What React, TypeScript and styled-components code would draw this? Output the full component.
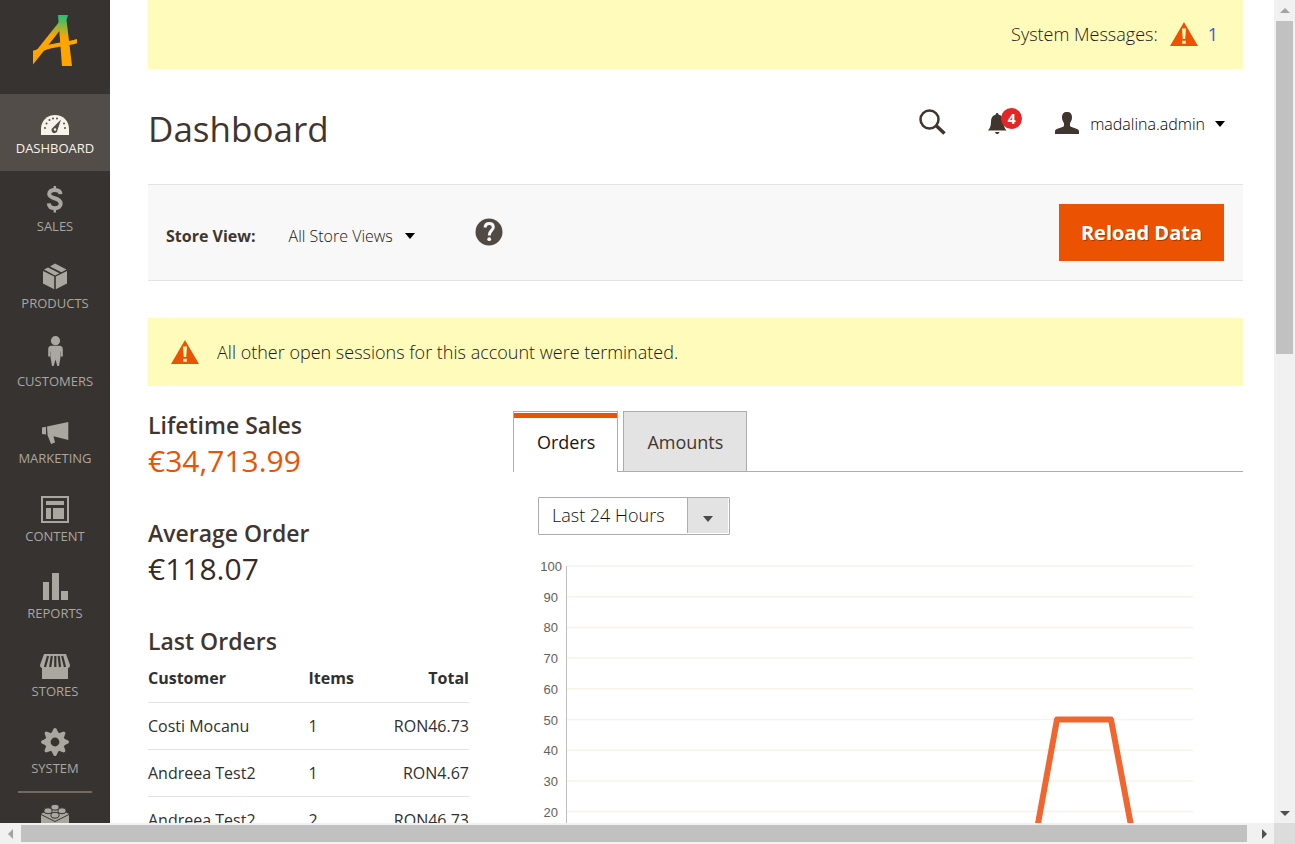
import React from "react";
import styled, { createGlobalStyle } from "styled-components";

const GlobalStyle = createGlobalStyle`
  *, *::before, *::after { box-sizing: border-box; }
  body {
    margin: 0;
    background: #fff;
    color: #41362f;
    font-family: "Open Sans", "Noto Sans", sans-serif;
    font-size: 16px;
    line-height: 22px;
  }
  button, select { font-family: inherit; color: inherit; }
  h1, h2, p, ul { margin: 0; padding: 0; }
`;

/* ---------- frame ---------- */

const Frame = styled.div`
  display: grid;
  grid-template-columns: minmax(0, 1fr) 21px;
  grid-template-rows: minmax(0, 1fr) 21px;
  height: 100vh;
  overflow: hidden;
`;

const Page = styled.div`
  display: flex;
  align-items: flex-start;
  overflow: hidden;
`;

const ScrollTrack = styled.div<{ $vertical?: boolean }>`
  display: flex;
  flex-direction: ${(p) => (p.$vertical ? "column" : "row")};
  padding: ${(p) => (p.$vertical ? "0 2px" : "2px 0")};
  background: #f1f1f1;
`;

const ScrollArrow = styled.span<{ $vertical?: boolean }>`
  flex: none;
  display: grid;
  place-items: center;
  width: ${(p) => (p.$vertical ? "17px" : "21px")};
  height: ${(p) => (p.$vertical ? "21px" : "17px")};
`;

const ScrollThumb = styled.span<{ $share: number }>`
  flex: ${(p) => p.$share} 1 0;
  background: #c1c1c1;
`;

const ScrollRest = styled.span<{ $share: number }>`
  flex: ${(p) => p.$share} 1 0;
`;

const ScrollCorner = styled.div`
  background: #dcdcdc;
`;

/* ---------- sidebar ---------- */

const Sidebar = styled.aside`
  flex: none;
  width: 110px;
  min-height: 100vh;
  background: #373330;
`;

const LogoLink = styled.a`
  display: flex;
  justify-content: center;
  height: 94px;
  padding-top: 15px;
`;

const Menu = styled.ul`
  list-style: none;
`;

const MenuLink = styled.a`
  display: flex;
  flex-direction: column;
  align-items: center;
  gap: 2px;
  padding-top: 10px;
  color: inherit;
  font-size: 13px;
  line-height: 16px;
  text-decoration: none;
  text-transform: uppercase;
`;

const MenuItem = styled.li<{ $active?: boolean }>`
  height: 77px;
  background: ${(p) => (p.$active ? "#524d49" : "transparent")};
  color: ${(p) => (p.$active ? "#f7f3eb" : "#aaa6a0")};

  &:nth-child(even) {
    height: 78px;
  }

  &:nth-child(even) ${MenuLink} {
    gap: 3px;
  }
`;

const MenuDivider = styled.hr`
  width: 74px;
  height: 2px;
  margin: 0 auto;
  border: 0;
  background: #736963;
`;

/* ---------- main column ---------- */

const Main = styled.main`
  flex: 1;
  min-width: 0;
  padding: 0 31px 0 38px;
`;

const SystemBar = styled.div`
  display: flex;
  align-items: center;
  justify-content: flex-end;
  gap: 12px;
  height: 69px;
  padding: 0 25px 2px 0;
  background: #fffbbb;
  color: #1c1612;
  font-size: 18px;
  font-weight: 300;
`;

const CountLink = styled.a`
  margin-left: -2px;
  color: #2f5fd6;
  font-weight: 400;
  text-decoration: none;
`;

const Header = styled.header`
  display: flex;
  align-items: center;
  justify-content: space-between;
  height: 115px;
  padding: 0 18px 0 0;
`;

const Title = styled.h1`
  padding-top: 5px;
  font-size: 35px;
  font-weight: 400;
  line-height: 48px;
`;

const Tools = styled.div`
  display: flex;
  align-items: center;
  padding-bottom: 6px;
`;

const IconButton = styled.button`
  position: relative;
  display: block;
  padding: 0;
  border: 0;
  background: none;
  margin-right: 42px;
`;

const BellButton = styled(IconButton)`
  margin-right: 47px;
`;

const Badge = styled.span`
  position: absolute;
  top: -1px;
  left: 13px;
  width: 21px;
  height: 21px;
  border-radius: 50%;
  background: #e22626;
  color: #fff;
  font-size: 14px;
  font-weight: 700;
  line-height: 21px;
  text-align: center;
`;

const AccountButton = styled.button`
  display: flex;
  align-items: center;
  gap: 10px;
  padding: 0;
  border: 0;
  background: none;
  color: #000;
  font-size: 16px;
  font-weight: 300;
  line-height: 22px;
`;

const Toolbar = styled.section`
  display: flex;
  align-items: center;
  height: 97px;
  padding: 0 19px 0 18px;
  border-top: 1px solid #e3e3e3;
  border-bottom: 1px solid #e3e3e3;
  background: #f8f8f8;
`;

const ToolbarLabel = styled.span`
  margin-right: 33px;
  padding-top: 6px;
  font-weight: 700;
`;

const StoreSwitch = styled.button`
  display: flex;
  align-items: center;
  gap: 12px;
  margin-right: 60px;
  padding: 6px 0 0;
  border: 0;
  background: none;
  color: #1c1612;
  font-size: 16px;
  font-weight: 300;
  line-height: 22px;
`;

const HelpLink = styled.a`
  display: block;
  height: 30px;
  margin-right: auto;
`;

const PrimaryButton = styled.button`
  height: 57px;
  padding: 0 22px;
  border: 0;
  background: #eb5202;
  color: #fff;
  font-size: 20px;
  font-weight: 700;
  text-shadow: 1px 1px 0 rgba(0, 0, 0, 0.3);
`;

const Notice = styled.p`
  display: flex;
  align-items: center;
  gap: 18px;
  height: 68px;
  padding-left: 23px;
  background: #fffbbb;
  color: #1c1612;
  font-size: 18px;
  font-weight: 300;

  && {
    margin: 37px 0 25px;
  }
`;

const Columns = styled.div`
  display: grid;
  grid-template-columns: minmax(0, 1fr) minmax(0, 2fr);
`;

const Summary = styled.div`
  padding-right: 44px;
`;

const Stat = styled.section`
  margin-bottom: 36px;
`;

const StatTitle = styled.h2`
  font-size: 23px;
  font-weight: 600;
  line-height: 28px;
`;

const StatValue = styled.p<{ $accent?: boolean }>`
  color: ${(p) => (p.$accent ? "#eb5202" : "#362b24")};
  font-size: 30px;
  font-weight: 400;
  line-height: 44px;
`;

const OrdersTable = styled.table`
  width: 100%;
  border-collapse: collapse;
  color: #303030;
`;

const HeadCell = styled.th<{ $end?: boolean }>`
  height: 47px;
  padding: 0;
  border-bottom: 1px solid #e3e3e3;
  font-weight: 700;
  text-align: ${(p) => (p.$end ? "right" : "left")};

  &:first-child {
    width: 50%;
  }
`;

const Cell = styled.td<{ $end?: boolean }>`
  height: 47px;
  padding: 0;
  border-bottom: 1px solid #e3e3e3;
  text-align: ${(p) => (p.$end ? "right" : "left")};
`;

const TabList = styled.div`
  display: flex;
  gap: 5px;
  border-bottom: 1px solid #adadad;
`;

const Tab = styled.button<{ $active?: boolean }>`
  height: ${(p) => (p.$active ? "61px" : "60px")};
  margin-bottom: ${(p) => (p.$active ? "-1px" : "0")};
  padding: ${(p) => (p.$active ? "0 22px 0 23px" : "0 23px")};
  border: 1px solid #adadad;
  border-bottom: 0;
  background: ${(p) => (p.$active ? "#fff" : "#e3e3e3")};
  box-shadow: ${(p) =>
    p.$active ? "inset 0 1px 0 #fff, inset 0 6px 0 #eb5202" : "none"};
  color: ${(p) => (p.$active ? "#1c1612" : "#41362f")};
  font-size: 18px;
  font-weight: 400;
`;

const Panel = styled.div`
  padding: 25px 0 0 25px;
`;

const SelectBox = styled.div`
  display: inline-grid;
  grid-template-columns: 150px 42px;
  width: 192px;
  height: 38px;
`;

const PeriodSelect = styled.select`
  grid-area: 1 / 1 / 2 / 3;
  appearance: none;
  width: 100%;
  height: 38px;
  padding: 0 54px 2px 13px;
  border: 1px solid #adadad;
  border-radius: 1px;
  background: #fff;
  color: #101010;
  font-size: 18px;
  font-weight: 300;
`;

const SelectArrow = styled.span`
  grid-area: 1 / 2 / 2 / 3;
  z-index: 1;
  display: grid;
  place-items: center;
  margin: 1px 2px 2px -1px;
  padding-top: 6px;
  border-left: 1px solid #adadad;
  background: #e3e3e3;
  pointer-events: none;
`;

const Chart = styled.svg`
  display: block;
  width: 100%;
  height: auto;
  margin-top: 19px;
`;

/* ---------- icons ---------- */

const MenuSvg = ({ children }: { children: React.ReactNode }) => (
  <svg width="36" height="34" viewBox="0 0 36 34" fill="currentColor" aria-hidden="true">
    {children}
  </svg>
);

const Logo = () => (
  <svg width="44" height="51" viewBox="0 0 44 51" fill="none" stroke="url(#leaf)" role="img" aria-label="Home">
    <defs>
      <linearGradient id="leaf" gradientUnits="userSpaceOnUse" x1="31" y1="0" x2="29" y2="22">
        <stop offset="0" stopColor="#1fc07a" />
        <stop offset="0.4" stopColor="#6fb94e" />
        <stop offset="1" stopColor="#ffa500" />
      </linearGradient>
    </defs>
    <path d="M25 0H35L33.500 5L34.700 15L39 51H29L26 12Z" fill="url(#leaf)" stroke="none" />
    <path d="M29 8L-5 51" strokeWidth="6" />
    <path d="M-2 38.500C6 36.500 9 33.500 17 31.500C27 29.500 36 28.500 46 25.500" strokeWidth="4" />
  </svg>
);

const GaugeIcon = () => (
  <MenuSvg>
    <path d="M4 31V25C4 17 10 11 18 11S32 17 32 25V31Z" />
    <g fill="#524d49">
      <circle cx="8" cy="24" r="1" />
      <circle cx="9.500" cy="19.500" r="1" />
      <circle cx="12.500" cy="16" r="1" />
      <circle cx="16" cy="14.500" r="1" />
      <circle cx="20" cy="14.500" r="1" />
      <circle cx="27" cy="19.500" r="1" />
      <circle cx="28" cy="24" r="1" />
      <path d="M24 15.500L20.500 26A3 3 0 1 1 16 23.500Z" />
    </g>
    <circle cx="18" cy="25.500" r="1.200" />
  </MenuSvg>
);

const DollarIcon = () => (
  <MenuSvg>
    <g fill="none" stroke="currentColor">
      <path
        d="M23.500 13.200C23.300 10.300 21 9 17.800 9C14.500 9 12.200 10.400 12.200 13C12.200 18.500 23.700 16 23.700 22.500C23.700 25.500 21.200 27.200 18 27.200C14.300 27.200 12 25.500 11.800 22.300"
        strokeWidth="4"
      />
      <path d="M17.800 5V9M17.800 27V31.500" strokeWidth="2.500" />
    </g>
  </MenuSvg>
);

const BoxIcon = () => (
  <MenuSvg>
    <path d="M6 12L17.200 17.500V30.300L6 24.500Z" />
    <path d="M30 12L18.800 17.500V30.300L30 24.500Z" />
    <path d="M7 10.600L11 8.500L22.500 14.300L18 16.500Z" />
    <path d="M13 7.400L18 4.500L29.500 10.600L24.500 13.300Z" />
  </MenuSvg>
);

const PersonIcon = () => (
  <MenuSvg>
    <circle cx="18.500" cy="4.700" r="4.600" />
    <path d="M14.500 9.800H22.500C24.800 9.800 25.800 11.200 25.800 13.200V20.500H24V15.500H23.700V20L22 30H20.300L18.500 23.500L16.700 30H15L13.300 20V15.500H13V20.500H11.200V13.200C11.200 11.200 12.200 9.800 14.500 9.800Z" />
  </MenuSvg>
);

const MegaphoneIcon = () => (
  <MenuSvg>
    <path d="M5 13.500L9 12.800V20.600L5 20Z" />
    <path d="M10 12.600L31.300 8V26L16.500 22.200L18 28.500L14 30L10.500 21Z" />
  </MenuSvg>
);

const LayoutIcon = () => (
  <MenuSvg>
    <rect x="5" y="6" width="26" height="25" fill="none" stroke="currentColor" strokeWidth="2" />
    <path d="M9 10H27V14H9ZM9 17H14V28H9ZM16 17H27V28H16Z" />
  </MenuSvg>
);

const BarsIcon = () => (
  <MenuSvg>
    <path d="M6 13H12V31H6ZM15 4H22V31H15ZM24 22H31V31H24Z" />
  </MenuSvg>
);

const StoreIcon = () => (
  <MenuSvg>
    <path d="M7 8H29L33 19C33 21 32 22 31 22V33H5V22C4 22 3 21 3 19Z" />
    <g stroke="#373330" strokeWidth="2.200">
      <path d="M11 10L8 21M14.800 10L13.200 21M18.300 10V21M21.700 10L23 21M25.200 10L28 21" />
    </g>
  </MenuSvg>
);

const GearIcon = () => (
  <MenuSvg>
    {[0, 45, 90, 135, 180, 225, 270, 315].map((a) => (
      <path key={a} d="M14.500 9L16.700 4.500Q18 3.500 19.300 4.500L21.500 9Z" transform={`rotate(${a} 18 18)`} />
    ))}
    <circle cx="18" cy="18" r="7.200" fill="none" stroke="currentColor" strokeWidth="5.600" />
  </MenuSvg>
);

const BlockIcon = () => (
  <MenuSvg>
    <path d="M4 11L18 4L32 11V27L18 34L4 27Z" />
    <path d="M4 11.500L18 18.500L32 11.500" fill="none" stroke="#373330" />
    <g stroke="#373330">
      {[
        [18, 3.5],
        [11, 7],
        [25, 7],
        [18, 11.5],
      ].map(([x, y]) => (
        <path key={`${x}-${y}`} d={`M${x - 4} ${y}a4 2.200 0 0 1 8 0v1.500a4 2.200 0 0 1 -8 0Z`} />
      ))}
    </g>
  </MenuSvg>
);

const WarningIcon = () => (
  <svg width="28" height="24" viewBox="0 0 28 24" aria-hidden="true">
    <path d="M14 0L28 24H0Z" fill="#eb5202" />
    <path d="M12 6.500H16L15.200 17H12.800ZM12.200 18.700H15.800V21.800H12.200Z" fill="#fffbbb" />
  </svg>
);

const SearchIcon = () => (
  <svg width="27" height="26" viewBox="0 0 27 26" fill="none" stroke="#41362f" aria-hidden="true">
    <circle cx="10.500" cy="10.500" r="9" strokeWidth="2.500" />
    <path d="M17 16.500L25.500 24.500" strokeWidth="3.500" />
  </svg>
);

const BellIcon = () => (
  <svg width="19" height="26" viewBox="0 0 19 26" fill="#41362f" aria-hidden="true">
    <path d="M9 4C10 4 10.500 4.700 10.500 5.500C14 6.500 15.500 9 15.500 12.500C15.500 17 16.500 19 18.500 21.500H0C2 19 3 17 3 12.500C3 9 4.500 6.500 7.800 5.500C7.800 4.700 8.200 4 9 4Z" />
    <path d="M7 23H11.500C11 24.500 10.200 25 9.200 25S7.500 24.500 7 23Z" />
  </svg>
);

const UserIcon = () => (
  <svg width="26" height="26" viewBox="0 0 26 26" fill="#41362f" aria-hidden="true">
    <path d="M13 1C16.500 1 18 3 18 6.500C18 9.500 16.500 11 16 12.500V15C18 17 24.500 17 25 20V23H1V20C1.500 17 8 17 10 15V12.500C9.500 11 8 9.500 8 6.500C8 3 9.500 1 13 1Z" />
  </svg>
);

const HelpIcon = () => (
  <svg width="28" height="28" viewBox="0 0 28 28" fill="none" role="img" aria-label="Help">
    <circle cx="14" cy="14" r="13.500" fill="#514943" />
    <path d="M10 9.500C10.300 6.800 12 5.500 14.300 5.500C16.800 5.500 18.300 7 18.300 9.200C18.300 12.500 14.200 12.500 14.200 17.500" stroke="#f8f8f8" strokeWidth="3" />
    <circle cx="14.200" cy="21.200" r="1.900" fill="#f8f8f8" />
  </svg>
);

const Caret = ({ color = "#000" }: { color?: string }) => (
  <svg width="10" height="6" viewBox="0 0 10 6" aria-hidden="true">
    <path d="M0 0H10L5 6Z" fill={color} />
  </svg>
);

const turns = { up: 180, down: 0, left: 90, right: 270 };

const ArrowGlyph = ({ to, color }: { to: keyof typeof turns; color: string }) => (
  <svg width="10" height="10" viewBox="0 0 10 10" aria-hidden="true">
    <path d="M0 3H10L5 8Z" fill={color} transform={`rotate(${turns[to]} 5 5)`} />
  </svg>
);

/* ---------- data ---------- */

const menu = [
  { label: "Dashboard", icon: <GaugeIcon /> },
  { label: "Sales", icon: <DollarIcon /> },
  { label: "Products", icon: <BoxIcon /> },
  { label: "Customers", icon: <PersonIcon /> },
  { label: "Marketing", icon: <MegaphoneIcon /> },
  { label: "Content", icon: <LayoutIcon /> },
  { label: "Reports", icon: <BarsIcon /> },
  { label: "Stores", icon: <StoreIcon /> },
  { label: "System", icon: <GearIcon /> },
];

const orders = [
  { customer: "Costi Mocanu", items: 1, total: "RON46.73" },
  { customer: "Andreea Test2", items: 1, total: "RON4.67" },
  { customer: "Andreea Test2", items: 2, total: "RON46.73" },
];

const ticks = [100, 90, 80, 70, 60, 50, 40, 30, 20, 10, 0];
const tickY = (value: number) => 12 + (100 - value) * 3.07;

const OrdersChart = () => (
  <Chart viewBox="0 0 705 340" role="img" aria-label="Orders in the last 24 hours">
    {ticks.map((t) => (
      <g key={t}>
        <line x1="29" x2="655" y1={tickY(t)} y2={tickY(t)} stroke="#f7f3ea" strokeWidth="1.500" />
        <text
          x={t === 100 ? 24 : 20}
          y={tickY(t) + 5}
          textAnchor="end"
          fill="#66615a"
          fontFamily="'Liberation Sans', Arial, sans-serif"
          fontSize="13"
        >
          {t}
        </text>
      </g>
    ))}
    <line x1="28.500" x2="28.500" y1="12" y2={tickY(0)} stroke="#bdbdbd" />
    <polyline
      points={`491,${tickY(0)} 519,${tickY(50)} 573,${tickY(50)} 602,${tickY(0)}`}
      fill="none"
      stroke="#f1662f"
      strokeWidth="6"
      strokeLinejoin="round"
    />
  </Chart>
);

export default function App() {
  return (
    <>
      <GlobalStyle />
      <Frame>
        <Page>
          <Sidebar>
            <LogoLink href="#home">
              <Logo />
            </LogoLink>
            <nav>
              <Menu>
                {menu.map((m, i) => (
                  <MenuItem key={m.label} $active={i === 0}>
                    <MenuLink href={`#${m.label.toLowerCase()}`}>
                      {m.icon}
                      {m.label}
                    </MenuLink>
                  </MenuItem>
                ))}
                <MenuItem>
                  <MenuDivider />
                  <MenuLink href="#partners" aria-label="Find partners and extensions">
                    <BlockIcon />
                  </MenuLink>
                </MenuItem>
              </Menu>
            </nav>
          </Sidebar>

          <Main>
            <SystemBar>
              System Messages:
              <WarningIcon />
              <CountLink href="#messages">1</CountLink>
            </SystemBar>

            <Header>
              <Title>Dashboard</Title>
              <Tools>
                <IconButton aria-label="Search">
                  <SearchIcon />
                </IconButton>
                <BellButton aria-label="Notifications">
                  <BellIcon />
                  <Badge>4</Badge>
                </BellButton>
                <AccountButton>
                  <UserIcon />
                  madalina.admin
                  <Caret />
                </AccountButton>
              </Tools>
            </Header>

            <Toolbar>
              <ToolbarLabel id="store-label">Store View:</ToolbarLabel>
              <StoreSwitch id="store-switch" aria-labelledby="store-label store-switch">
                All Store Views
                <Caret />
              </StoreSwitch>
              <HelpLink href="#help">
                <HelpIcon />
              </HelpLink>
              <PrimaryButton>Reload Data</PrimaryButton>
            </Toolbar>

            <Notice>
              <WarningIcon />
              All other open sessions for this account were terminated.
            </Notice>

            <Columns>
              <Summary>
                <Stat>
                  <StatTitle>Lifetime Sales</StatTitle>
                  <StatValue $accent>€34,713.99</StatValue>
                </Stat>
                <Stat>
                  <StatTitle>Average Order</StatTitle>
                  <StatValue>€118.07</StatValue>
                </Stat>
                <Stat>
                  <StatTitle>Last Orders</StatTitle>
                  <OrdersTable>
                    <thead>
                      <tr>
                        <HeadCell>Customer</HeadCell>
                        <HeadCell>Items</HeadCell>
                        <HeadCell $end>Total</HeadCell>
                      </tr>
                    </thead>
                    <tbody>
                      {orders.map((o, i) => (
                        <tr key={i}>
                          <Cell>{o.customer}</Cell>
                          <Cell>{o.items}</Cell>
                          <Cell $end>{o.total}</Cell>
                        </tr>
                      ))}
                    </tbody>
                  </OrdersTable>
                </Stat>
              </Summary>

              <section>
                <TabList role="tablist">
                  <Tab role="tab" aria-selected="true" $active>
                    Orders
                  </Tab>
                  <Tab role="tab" aria-selected="false">
                    Amounts
                  </Tab>
                </TabList>
                <Panel role="tabpanel">
                  <SelectBox>
                    <PeriodSelect aria-label="Period" defaultValue="24h">
                      <option value="24h">Last 24 Hours</option>
                    </PeriodSelect>
                    <SelectArrow>
                      <Caret color="#514943" />
                    </SelectArrow>
                  </SelectBox>
                  <OrdersChart />
                </Panel>
              </section>
            </Columns>
          </Main>
        </Page>

        <ScrollTrack $vertical aria-hidden="true">
          <ScrollArrow $vertical>
            <ArrowGlyph to="up" color="#a3a3a3" />
          </ScrollArrow>
          <ScrollThumb $share={333} />
          <ScrollRest $share={448} />
          <ScrollArrow $vertical>
            <ArrowGlyph to="down" color="#505050" />
          </ScrollArrow>
        </ScrollTrack>
        <ScrollTrack aria-hidden="true">
          <ScrollArrow>
            <ArrowGlyph to="left" color="#a3a3a3" />
          </ScrollArrow>
          <ScrollThumb $share={1226} />
          <ScrollRest $share={6} />
          <ScrollArrow>
            <ArrowGlyph to="right" color="#505050" />
          </ScrollArrow>
        </ScrollTrack>
        <ScrollCorner />
      </Frame>
    </>
  );
}
